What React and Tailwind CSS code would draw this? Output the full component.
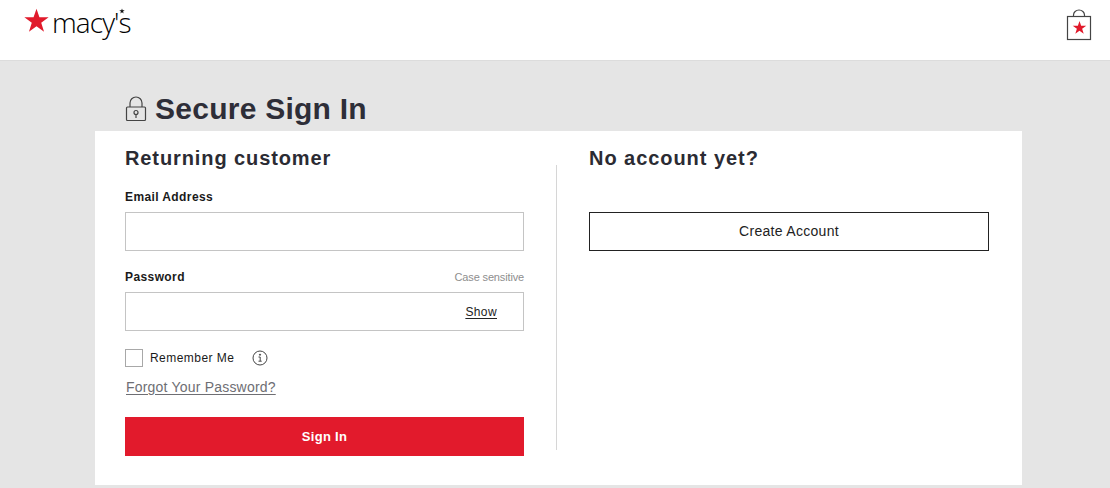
const star = "M12 1.5 14.6 9.2 22.8 9.2 16.2 14.1 18.7 22 12 17.2 5.3 22 7.8 14.1 1.2 9.2 9.4 9.2Z";

function Logo() {
  return (
    <div className="flex items-start">
      <svg width="27" height="27" viewBox="0 0 24 24" className="mt-[7px]"><path d={star} fill="#e11a2b" /></svg>
      <div className="relative mt-[4px] ml-[2px] text-[28px] leading-[36px] tracking-[-0.9px] text-[#000] font-['Open_Sans',sans-serif] font-light">
        macy's
        <svg width="6" height="6" viewBox="0 0 24 24" className="absolute right-[6px] top-[4px]"><path d={star} fill="#111" /></svg>
      </div>
    </div>
  );
}

function Bag() {
  return (
    <svg width="26" height="32" viewBox="0 0 26 32" className="mt-[9px]">
      <path d="M7.5 7V6a5.5 5 0 0 1 11 0v1" fill="none" stroke="#444" strokeWidth="1.2" />
      <rect x="1.5" y="7.5" width="23" height="23" fill="#fff" stroke="#444" strokeWidth="1.2" />
      <svg x="6" y="11" width="15" height="15" viewBox="0 0 24 24"><path d={star} fill="#e11a2b" /></svg>
    </svg>
  );
}

function Lock() {
  return (
    <svg width="22" height="26" viewBox="0 0 22 26" fill="none" stroke="#444" strokeWidth="1.2">
      <path d="M5 11V7a6 6 0 0 1 12 0v4" />
      <rect x="1.5" y="11" width="19" height="13.5" rx="1" />
      <circle cx="11" cy="16.5" r="2" />
      <path d="M11 18.5V22" />
    </svg>
  );
}

export default function App() {
  return (
    <div className="h-[488px] w-[1110px] overflow-hidden bg-[#e5e5e5] font-['Liberation_Sans',Arial,sans-serif] text-[#2b2b33]">
      <header className="flex h-[61px] items-start justify-between border-b border-[#dcdcdc] bg-white pl-[23px] pr-[18px]">
        <Logo />
        <Bag />
      </header>
      <div className="flex h-[70px] items-center gap-[8px] pl-[125px] pt-[25px]">
        <Lock />
        <h1 className="text-[30px] font-bold leading-[36px] tracking-[0.25px] text-[#2e2e38]">Secure Sign In</h1>
      </div>
      <main className="mx-[95px] flex h-[354px] w-[927px] bg-white pl-[30px] pt-[14px]">
        <section className="w-[399px]">
          <h2 className="text-[20px] font-bold leading-[26px] tracking-[0.9px]">Returning customer</h2>
          <label className="mt-[18px] block text-[12px] font-bold leading-[16px] tracking-[0.4px] text-[#1a1a1a]">Email Address</label>
          <div className="mt-[7px] h-[39px] border border-[#c4c4c4]" />
          <div className="mt-[18px] flex items-center justify-between leading-[16px]">
            <label className="text-[12px] font-bold tracking-[0.4px] text-[#1a1a1a]">Password</label>
            <span className="text-[11px] tracking-[-0.15px] text-[#8e8e8e]">Case sensitive</span>
          </div>
          <div className="mt-[7px] flex h-[39px] items-center justify-end border border-[#c4c4c4] pr-[26px]">
            <span className="text-[12px] tracking-[0.4px] text-[#222] underline underline-offset-2">Show</span>
          </div>
          <div className="mt-[18px] flex h-[18px] items-center">
            <span className="h-[18px] w-[18px] border border-[#a8a8a8]" />
            <span className="ml-[7px] mb-[1px] text-[12px] tracking-[0.45px] text-[#1a1a1a]">Remember Me</span>
            <svg width="16" height="16" viewBox="0 0 16 16" fill="none" stroke="#444" className="ml-[18px]">
              <circle cx="8" cy="8" r="7" />
              <path d="M6.5 7h1.7v4M6.5 11.2h3.2" />
              <circle cx="8" cy="4.7" r=".6" fill="#444" />
            </svg>
          </div>
          <a className="ml-[1px] mt-[11px] block text-[14px] leading-[18px] tracking-[0.2px] text-[#6e6e73] underline underline-offset-2">Forgot Your Password?</a>
          <button className="mt-[21px] block h-[39px] w-full bg-[#e21a2c] text-[13px] font-bold tracking-[0.3px] text-white">Sign In</button>
        </section>
        <div className="ml-[32px] mt-[20px] h-[285px] w-px bg-[#d6d6d6]" />
        <section className="ml-[32px] w-[400px]">
          <h2 className="text-[20px] font-bold leading-[26px] tracking-[0.95px]">No account yet?</h2>
          <button className="mt-[41px] block h-[39px] w-full border border-[#222] text-[14px] tracking-[0.3px] text-[#222]">Create Account</button>
        </section>
      </main>
    </div>
  );
}
